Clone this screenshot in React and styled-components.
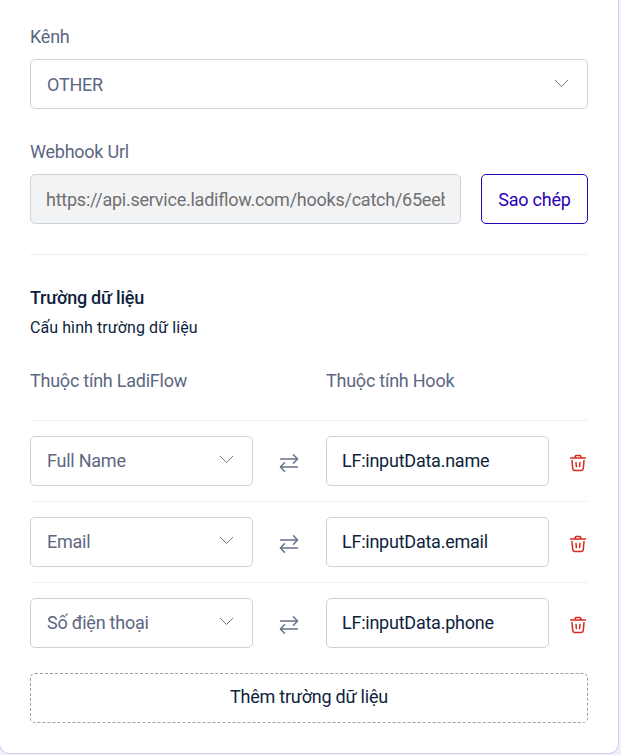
import React from "react";
import styled, { createGlobalStyle } from "styled-components";

const GlobalStyle = createGlobalStyle`
  *, *::before, *::after { box-sizing: border-box; }
  body {
    margin: 0;
    background: #f1f1f4;
    font-family: Roboto, "Noto Sans", sans-serif;
    font-size: 18px;
    letter-spacing: -0.24px;
    font-feature-settings: "liga" 1;
    color: #0f1f3d;
    overflow: hidden;
  }
  button, input { font: inherit; letter-spacing: inherit; font-feature-settings: inherit; }
`;

const Card = styled.main`
  width: 620px;
  height: 754px;
  margin-left: -1px;
  padding: 26px 30px 0 30px;
  background: #fff;
  border: 1px solid #d2cbfb;
  border-top: 0;
  border-radius: 0 0 10px 10px;
`;

const Label = styled.label`
  display: block;
  height: 22px;
  line-height: 22px;
  color: #5c6782;
`;

const Field = styled.section`
  display: flex;
  flex-direction: column;
  gap: 11px;
  margin-bottom: ${(p) => (p.$last ? 30 : 32)}px;
`;

const SelectBox = styled.div`
  display: flex;
  align-items: center;
  justify-content: space-between;
  width: 100%;
  height: 50px;
  padding: ${(p) => (p.$wide ? 2 : 0)}px 18px 0 16px;
  border: 1px solid #d0d1d8;
  border-radius: 5px;
  background: #fff;
  color: #5c6782;
  line-height: 22px;
`;

const ChevronIcon = styled.svg`
  flex: none;
  width: 15px;
  height: 9px;
  margin-bottom: 4px;
  fill: none;
  stroke: #777;
  stroke-width: 1;
`;

const UrlRow = styled.div`
  display: grid;
  grid-template-columns: 431px 107px;
  gap: 20px;
`;

const TextInput = styled.input`
  width: 100%;
  min-width: 0;
  height: 50px;
  padding: 0 15px ${(p) => (p.disabled ? 0 : 2)}px;
  border: 1px solid ${(p) => (p.disabled ? "#ced4da" : "#d0d1d8")};
  border-radius: 5px;
  outline: none;
  background: ${(p) => (p.disabled ? "#f2f3f5" : "#fff")};
  color: ${(p) => (p.disabled ? "#707070" : "#0f1f3d")};
`;

const CopyButton = styled.button`
  height: 50px;
  padding: 0;
  border: 1px solid #2a00b7;
  border-radius: 5px;
  background: #fff;
  color: #2a00b7;
`;

const Divider = styled.hr`
  height: 1px;
  margin: 0;
  border: 0;
  background: #efeff2;
`;

const Heading = styled.h2`
  margin: 32px 0 0;
  height: 22px;
  line-height: 22px;
  font-size: 18px;
  font-weight: 500;
`;

const Subtitle = styled.p`
  margin: 9px 0 0;
  height: 20px;
  line-height: 20px;
  font-size: 16px;
  letter-spacing: 0.08px;
`;

const ColumnHeads = styled.div`
  display: grid;
  grid-template-columns: 223px 223px;
  column-gap: 73px;
  margin: 32px 0 28px;
`;

const MappingRow = styled.div`
  display: grid;
  grid-template-columns: 223px 73px 223px 39px;
  align-items: center;
  height: 81px;
  border-top: 1px solid #f1f1f4;
`;

const SwapCell = styled.span`
  display: flex;
  justify-content: center;
  padding: 4px 2px 0 0;
`;

const DeleteButton = styled.button`
  display: flex;
  justify-content: flex-end;
  padding: 4px 1px 0 0;
  border: 0;
  background: transparent;
`;

const SwapIcon = styled.svg`
  width: 20px;
  height: 20px;
  fill: none;
  stroke: #667289;
  stroke-width: 1.5;
  stroke-linecap: round;
  stroke-linejoin: round;
`;

const TrashIcon = styled.svg`
  width: 18px;
  height: 18px;
  fill: none;
  stroke: #d9291c;
  stroke-width: 1.5;
  stroke-linecap: round;
  stroke-linejoin: round;
`;

const AddButton = styled.button`
  width: 100%;
  height: 50px;
  margin-top: 10px;
  padding: 0 0 3px;
  border: 1px dashed #a0a0a3;
  border-radius: 5px;
  background: #fff;
  color: #0f1f3d;
`;

function Select({ value, wide }) {
  return (
    <SelectBox $wide={wide}>
      <span>{value}</span>
      <ChevronIcon viewBox="0 0 15 9">
        <path d="M1 1 L7.5 7.5 L14 1" />
      </ChevronIcon>
    </SelectBox>
  );
}

const mappings = [
  { attribute: "Full Name", hook: "LF:inputData.name" },
  { attribute: "Email", hook: "LF:inputData.email" },
  { attribute: "Số điện thoại", hook: "LF:inputData.phone" },
];

export default function App() {
  return (
    <>
      <GlobalStyle />
      <Card>
        <Field>
          <Label>Kênh</Label>
          <Select value="OTHER" wide />
        </Field>
        <Field $last>
          <Label>Webhook Url</Label>
          <UrlRow>
            <TextInput
              disabled
              defaultValue="https://api.service.ladiflow.com/hooks/catch/65eeb"
            />
            <CopyButton>Sao chép</CopyButton>
          </UrlRow>
        </Field>
        <Divider />
        <Heading>Trường dữ liệu</Heading>
        <Subtitle>Cấu hình trường dữ liệu</Subtitle>
        <ColumnHeads>
          <Label>Thuộc tính LadiFlow</Label>
          <Label>Thuộc tính Hook</Label>
        </ColumnHeads>
        {mappings.map(({ attribute, hook }) => (
          <MappingRow key={hook}>
            <Select value={attribute} />
            <SwapCell>
              <SwapIcon viewBox="0 0 20 20">
                <path d="M1.5 6 H18.5 M14.5 1.8 L18.6 6 L14.5 10.2 M18.5 14 H1.5 M5.5 9.8 L1.4 14 L5.5 18.2" />
              </SwapIcon>
            </SwapCell>
            <TextInput defaultValue={hook} />
            <DeleteButton aria-label="Xóa">
              <TrashIcon viewBox="0 0 18 18">
                <path d="M1.6 4 H16.4 M5.8 3.8 L6.4 2.1 Q6.6 1.6 7.2 1.6 H10.8 Q11.4 1.6 11.6 2.1 L12.2 3.8 M3 6.5 L3.7 14.6 Q3.9 16.4 5.7 16.4 H12.3 Q14.1 16.4 14.3 14.6 L15 6.5 M7 8.5 L7.4 12.5 M11 8.5 L10.6 12.5" />
              </TrashIcon>
            </DeleteButton>
          </MappingRow>
        ))}
        <AddButton>Thêm trường dữ liệu</AddButton>
      </Card>
    </>
  );
}
